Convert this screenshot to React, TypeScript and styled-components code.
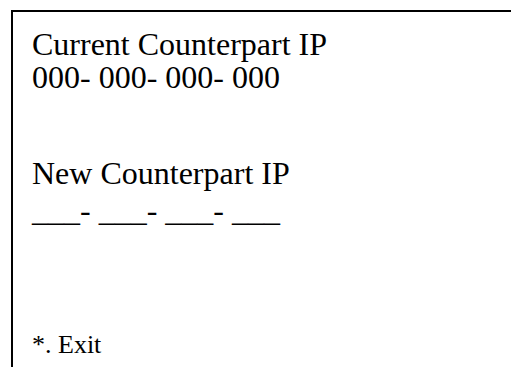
import styled, { createGlobalStyle } from "styled-components";

const Global = createGlobalStyle`
  html, body {
    margin: 0;
    padding: 0;
    background: #fff;
    overflow: hidden;
  }
  body {
    font-family: "Liberation Serif", "Times New Roman", serif;
    color: #000;
  }
`;

const Screen = styled.div`
  width: 511px;
  height: 367px;
  padding: 10px 0 0 11px;
  box-sizing: border-box;
  overflow: hidden;
`;

// only top + left edges show, the rest runs off the page
const Panel = styled.div`
  width: 600px;
  height: 400px;
  border-top: 2px solid #000;
  border-left: 2px solid #000;
  padding: 16px 0 0 19px;
  box-sizing: border-box;
  display: flex;
  flex-direction: column;
`;

const Line = styled.div<{ $gap?: number }>`
  font-size: 32px;
  line-height: 33px;
  white-space: pre;
  margin-top: ${(p) => p.$gap ?? 0}px;
`;

const Footer = styled.div<{ $gap?: number }>`
  font-size: 26px;
  line-height: 30px;
  margin-top: ${(p) => p.$gap ?? 0}px;
`;

export default function App() {
  return (
    <>
      <Global />
      <Screen>
        <Panel>
          <Line>Current Counterpart IP</Line>
          <Line>000- 000- 000- 000</Line>
          <Line $gap={63}>New Counterpart IP</Line>
          <Line $gap={4}>___- ___- ___- ___</Line>
          <Footer $gap={103}>*. Exit</Footer>
        </Panel>
      </Screen>
    </>
  );
}
